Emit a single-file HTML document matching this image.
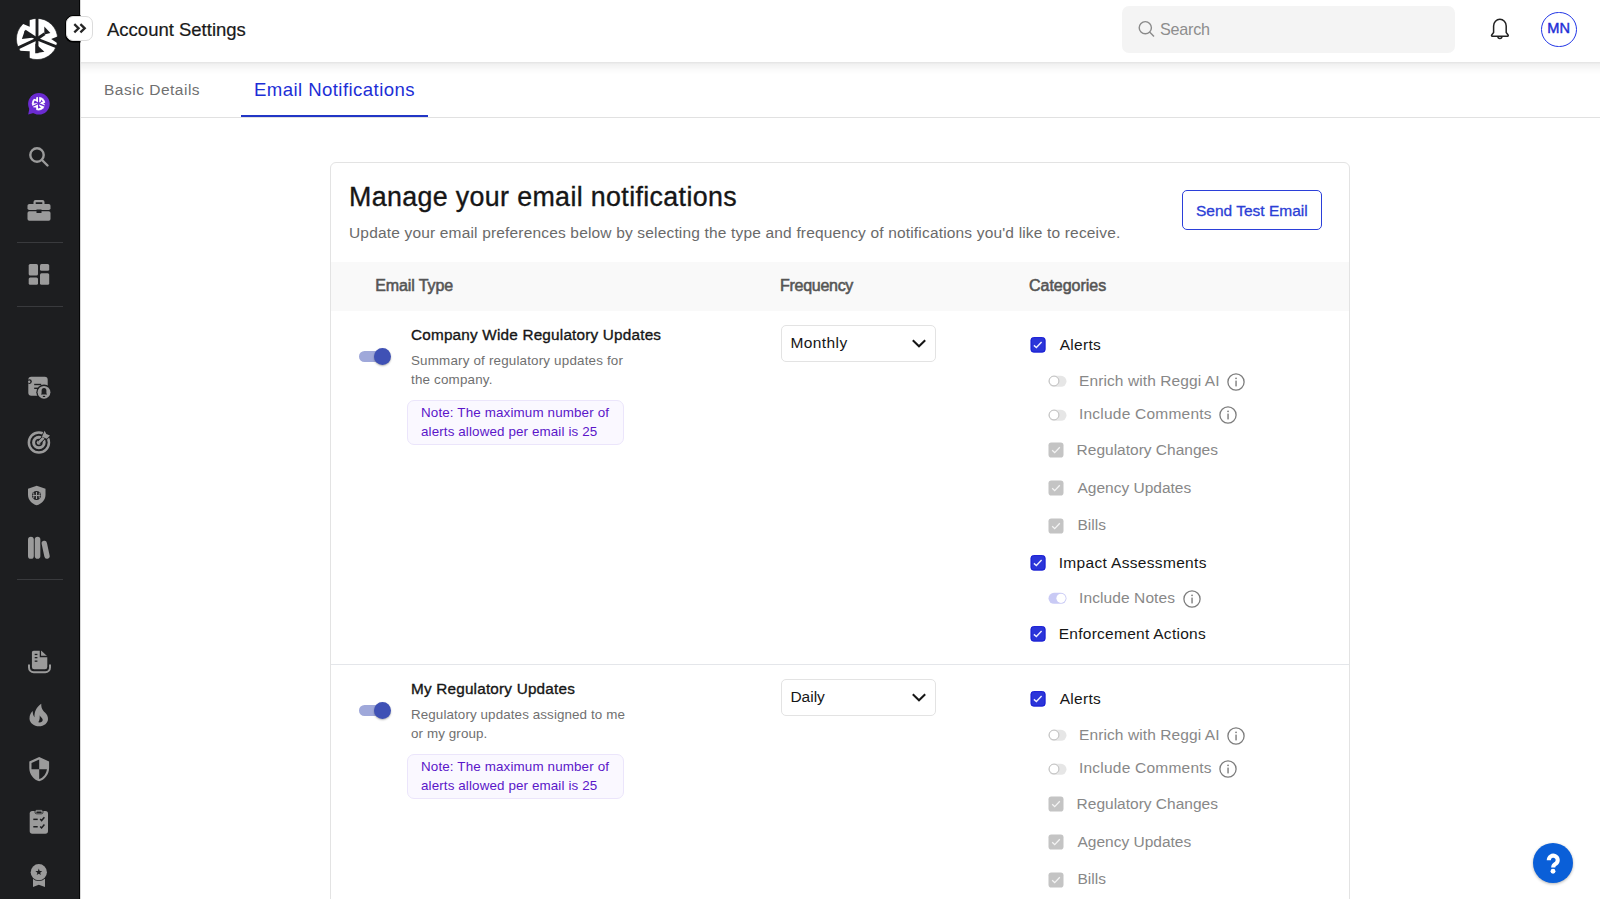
<!DOCTYPE html>
<html><head><meta charset="utf-8"><title>Account Settings</title>
<style>
html,body{margin:0;padding:0;width:1600px;height:899px;overflow:hidden;background:#fff;font-family:"Liberation Sans",sans-serif;}
.t{position:absolute;white-space:nowrap;}
</style></head><body>
<div style="position:absolute;left:0;top:0;width:1600px;height:899px;overflow:hidden">
<div style="position:absolute;left:330px;top:162px;width:1020px;height:760px;border:1px solid #e3e3e3;border-radius:6px;box-sizing:border-box;background:#fff"></div>
<div class="t" style="left:349.00px;top:183.91px;font-size:26.8px;line-height:26.8px;color:#161616;font-weight:400;letter-spacing:0.36px;-webkit-text-stroke:0.35px #161616">Manage your email notifications</div>
<div class="t" style="left:349.00px;top:224.88px;font-size:15.5px;line-height:15.5px;color:#6a6a6a;font-weight:400;letter-spacing:0.17px;">Update your email preferences below by selecting the type and frequency of notifications you'd like to receive.</div>
<div style="position:absolute;left:1182px;top:190px;width:140px;height:39.5px;border:1.5px solid #2b3fd9;border-radius:5px;box-sizing:border-box"></div>
<div class="t" style="left:1196.00px;top:202.78px;font-size:15.5px;line-height:15.5px;color:#2b3ed6;font-weight:400;letter-spacing:0px;-webkit-text-stroke:0.3px #2b3ed6">Send Test Email</div>
<div style="position:absolute;left:331px;top:262px;width:1018px;height:49px;background:#f9f9f9"></div>
<div class="t" style="left:375.30px;top:277.95px;font-size:16px;line-height:16px;color:#555;font-weight:400;letter-spacing:-0.12px;-webkit-text-stroke:0.55px #555">Email Type</div>
<div class="t" style="left:780.00px;top:277.95px;font-size:16px;line-height:16px;color:#555;font-weight:400;letter-spacing:-0.28px;-webkit-text-stroke:0.55px #555">Frequency</div>
<div class="t" style="left:1029.00px;top:277.95px;font-size:16px;line-height:16px;color:#555;font-weight:400;letter-spacing:-0.02px;-webkit-text-stroke:0.55px #555">Categories</div>
<div style="position:absolute;left:331px;top:664px;width:1018px;height:1.3px;background:#e4e6ea"></div>
<div style="position:absolute;left:359px;top:351px;width:30px;height:11px;background:#9fa8da;border-radius:6px"></div>
<div style="position:absolute;left:373.5px;top:348px;width:17.3px;height:17.3px;background:#3f51b5;border-radius:50%;box-shadow:0 1px 2px rgba(0,0,0,0.3)"></div>
<div class="t" style="left:411.00px;top:327.05px;font-size:15.3px;line-height:15.3px;color:#161616;font-weight:400;letter-spacing:0.2px;-webkit-text-stroke:0.35px #161616">Company Wide Regulatory Updates</div>
<div class="t" style="left:411.00px;top:353.55px;font-size:13.4px;line-height:13.4px;color:#707070;font-weight:400;letter-spacing:0.18px;">Summary of regulatory updates for</div>
<div class="t" style="left:411.00px;top:372.55px;font-size:13.4px;line-height:13.4px;color:#707070;font-weight:400;letter-spacing:0.18px;">the company.</div>
<div style="position:absolute;left:407px;top:400px;width:217px;height:45px;background:#faf8ff;border:1px solid #ebe5fb;border-radius:7px;box-sizing:border-box"></div>
<div class="t" style="left:421.00px;top:405.75px;font-size:13.4px;line-height:13.4px;color:#5b16c9;font-weight:400;letter-spacing:0.14px;">Note: The maximum number of</div>
<div class="t" style="left:421.00px;top:424.95px;font-size:13.4px;line-height:13.4px;color:#5b16c9;font-weight:400;letter-spacing:0.12px;">alerts allowed per email is 25</div>
<div style="position:absolute;left:780.5px;top:324.5px;width:155px;height:37px;border:1.5px solid #e3e3e3;border-radius:5px;box-sizing:border-box;background:#fff"></div>
<div class="t" style="left:790.40px;top:334.88px;font-size:15.5px;line-height:15.5px;color:#161616;font-weight:400;letter-spacing:0.43px;">Monthly</div>
<svg style="position:absolute;left:910px;top:335.5px" width="18" height="14" viewBox="0 0 18 14">
<path d="M2.8 4.2 L9 10.3 L15.2 4.2" fill="none" stroke="#161616" stroke-width="2.0"/>
</svg>
<svg style="position:absolute;left:1029.7px;top:337.1px" width="16" height="16" viewBox="0 0 16 16">
<rect x="0.95" y="0.55" width="14.2" height="14.6" rx="2.6" fill="#2b35d9" stroke="#0d12d2" stroke-width="0.9"/>
<path d="M3.9 8.4 L6.4 10.6 L11.6 5" fill="none" stroke="#eef" stroke-width="1.4"/>
</svg>
<div class="t" style="left:1059.70px;top:337.28px;font-size:15.5px;line-height:15.5px;color:#161616;font-weight:400;letter-spacing:0.3px;">Alerts</div>
<svg style="position:absolute;left:1047.5px;top:375px" width="20" height="13" viewBox="0 0 20 13">
<rect x="0.5" y="0.8" width="18" height="11" rx="5.5" fill="#e6e6e6"/>
<circle cx="6" cy="6" r="4.9" fill="#fff" stroke="#bdbdbd" stroke-width="1"/>
</svg>
<div class="t" style="left:1079.00px;top:372.58px;font-size:15.5px;line-height:15.5px;color:#888;font-weight:400;letter-spacing:0.1px;">Enrich with Reggi AI</div>
<svg style="position:absolute;left:1225.6px;top:371.5px" width="20" height="20" viewBox="0 0 20 20">
<circle cx="10" cy="10" r="8.1" fill="none" stroke="#7d7d7d" stroke-width="1.3"/>
<rect x="9.35" y="8.6" width="1.4" height="5.8" fill="#7d7d7d"/>
<circle cx="10.05" cy="6.3" r="0.9" fill="#7d7d7d"/>
</svg>
<svg style="position:absolute;left:1047.5px;top:408.5px" width="20" height="13" viewBox="0 0 20 13">
<rect x="0.5" y="0.8" width="18" height="11" rx="5.5" fill="#e6e6e6"/>
<circle cx="6" cy="6" r="4.9" fill="#fff" stroke="#bdbdbd" stroke-width="1"/>
</svg>
<div class="t" style="left:1079.00px;top:406.08px;font-size:15.5px;line-height:15.5px;color:#888;font-weight:400;letter-spacing:0.22px;">Include Comments</div>
<svg style="position:absolute;left:1217.6px;top:404.6px" width="20" height="20" viewBox="0 0 20 20">
<circle cx="10" cy="10" r="8.1" fill="none" stroke="#7d7d7d" stroke-width="1.3"/>
<rect x="9.35" y="8.6" width="1.4" height="5.8" fill="#7d7d7d"/>
<circle cx="10.05" cy="6.3" r="0.9" fill="#7d7d7d"/>
</svg>
<svg style="position:absolute;left:1047.8px;top:442px" width="16" height="16" viewBox="0 0 16 16">
<rect x="0.5" y="0.5" width="15" height="15" rx="2.8" fill="#c4c4c4"/>
<path d="M4.2 8.2 L6.7 10.6 L11.8 5.3" fill="none" stroke="#f4f4f4" stroke-width="1.3"/>
</svg>
<div class="t" style="left:1076.60px;top:442.08px;font-size:15.5px;line-height:15.5px;color:#888;font-weight:400;letter-spacing:0px;">Regulatory Changes</div>
<svg style="position:absolute;left:1047.8px;top:480px" width="16" height="16" viewBox="0 0 16 16">
<rect x="0.5" y="0.5" width="15" height="15" rx="2.8" fill="#c4c4c4"/>
<path d="M4.2 8.2 L6.7 10.6 L11.8 5.3" fill="none" stroke="#f4f4f4" stroke-width="1.3"/>
</svg>
<div class="t" style="left:1077.50px;top:479.68px;font-size:15.5px;line-height:15.5px;color:#888;font-weight:400;letter-spacing:0px;">Agency Updates</div>
<svg style="position:absolute;left:1047.8px;top:518px" width="16" height="16" viewBox="0 0 16 16">
<rect x="0.5" y="0.5" width="15" height="15" rx="2.8" fill="#c4c4c4"/>
<path d="M4.2 8.2 L6.7 10.6 L11.8 5.3" fill="none" stroke="#f4f4f4" stroke-width="1.3"/>
</svg>
<div class="t" style="left:1077.50px;top:516.88px;font-size:15.5px;line-height:15.5px;color:#888;font-weight:400;letter-spacing:0px;">Bills</div>
<svg style="position:absolute;left:1029.7px;top:555.1px" width="16" height="16" viewBox="0 0 16 16">
<rect x="0.95" y="0.55" width="14.2" height="14.6" rx="2.6" fill="#2b35d9" stroke="#0d12d2" stroke-width="0.9"/>
<path d="M3.9 8.4 L6.4 10.6 L11.6 5" fill="none" stroke="#eef" stroke-width="1.4"/>
</svg>
<div class="t" style="left:1058.70px;top:555.38px;font-size:15.5px;line-height:15.5px;color:#161616;font-weight:400;letter-spacing:0.33px;">Impact Assessments</div>
<svg style="position:absolute;left:1047.5px;top:592px" width="20" height="13" viewBox="0 0 20 13">
<rect x="0.5" y="0.8" width="18" height="11" rx="5.5" fill="#c9caf5"/>
<circle cx="13" cy="6.3" r="4.6" fill="#fff"/>
</svg>
<div class="t" style="left:1079.00px;top:590.38px;font-size:15.5px;line-height:15.5px;color:#888;font-weight:400;letter-spacing:0.1px;">Include Notes</div>
<svg style="position:absolute;left:1182px;top:589.2px" width="20" height="20" viewBox="0 0 20 20">
<circle cx="10" cy="10" r="8.1" fill="none" stroke="#7d7d7d" stroke-width="1.3"/>
<rect x="9.35" y="8.6" width="1.4" height="5.8" fill="#7d7d7d"/>
<circle cx="10.05" cy="6.3" r="0.9" fill="#7d7d7d"/>
</svg>
<svg style="position:absolute;left:1029.7px;top:626.1px" width="16" height="16" viewBox="0 0 16 16">
<rect x="0.95" y="0.55" width="14.2" height="14.6" rx="2.6" fill="#2b35d9" stroke="#0d12d2" stroke-width="0.9"/>
<path d="M3.9 8.4 L6.4 10.6 L11.6 5" fill="none" stroke="#eef" stroke-width="1.4"/>
</svg>
<div class="t" style="left:1058.70px;top:625.88px;font-size:15.5px;line-height:15.5px;color:#161616;font-weight:400;letter-spacing:0.27px;">Enforcement Actions</div>
<div style="position:absolute;left:359px;top:705px;width:30px;height:11px;background:#9fa8da;border-radius:6px"></div>
<div style="position:absolute;left:373.5px;top:702px;width:17.3px;height:17.3px;background:#3f51b5;border-radius:50%;box-shadow:0 1px 2px rgba(0,0,0,0.3)"></div>
<div class="t" style="left:411.00px;top:681.05px;font-size:15.3px;line-height:15.3px;color:#161616;font-weight:400;letter-spacing:0.2px;-webkit-text-stroke:0.35px #161616">My Regulatory Updates</div>
<div class="t" style="left:411.00px;top:707.55px;font-size:13.4px;line-height:13.4px;color:#707070;font-weight:400;letter-spacing:0.1px;">Regulatory updates assigned to me</div>
<div class="t" style="left:411.00px;top:726.55px;font-size:13.4px;line-height:13.4px;color:#707070;font-weight:400;letter-spacing:0.1px;">or my group.</div>
<div style="position:absolute;left:407px;top:754px;width:217px;height:45px;background:#faf8ff;border:1px solid #ebe5fb;border-radius:7px;box-sizing:border-box"></div>
<div class="t" style="left:421.00px;top:759.75px;font-size:13.4px;line-height:13.4px;color:#5b16c9;font-weight:400;letter-spacing:0.14px;">Note: The maximum number of</div>
<div class="t" style="left:421.00px;top:778.95px;font-size:13.4px;line-height:13.4px;color:#5b16c9;font-weight:400;letter-spacing:0.12px;">alerts allowed per email is 25</div>
<div style="position:absolute;left:780.5px;top:678.5px;width:155px;height:37px;border:1.5px solid #e3e3e3;border-radius:5px;box-sizing:border-box;background:#fff"></div>
<div class="t" style="left:790.40px;top:688.88px;font-size:15.5px;line-height:15.5px;color:#161616;font-weight:400;letter-spacing:0px;">Daily</div>
<svg style="position:absolute;left:910px;top:689.5px" width="18" height="14" viewBox="0 0 18 14">
<path d="M2.8 4.2 L9 10.3 L15.2 4.2" fill="none" stroke="#161616" stroke-width="2.0"/>
</svg>
<svg style="position:absolute;left:1029.7px;top:691.1px" width="16" height="16" viewBox="0 0 16 16">
<rect x="0.95" y="0.55" width="14.2" height="14.6" rx="2.6" fill="#2b35d9" stroke="#0d12d2" stroke-width="0.9"/>
<path d="M3.9 8.4 L6.4 10.6 L11.6 5" fill="none" stroke="#eef" stroke-width="1.4"/>
</svg>
<div class="t" style="left:1059.70px;top:691.28px;font-size:15.5px;line-height:15.5px;color:#161616;font-weight:400;letter-spacing:0.3px;">Alerts</div>
<svg style="position:absolute;left:1047.5px;top:729px" width="20" height="13" viewBox="0 0 20 13">
<rect x="0.5" y="0.8" width="18" height="11" rx="5.5" fill="#e6e6e6"/>
<circle cx="6" cy="6" r="4.9" fill="#fff" stroke="#bdbdbd" stroke-width="1"/>
</svg>
<div class="t" style="left:1079.00px;top:726.58px;font-size:15.5px;line-height:15.5px;color:#888;font-weight:400;letter-spacing:0.1px;">Enrich with Reggi AI</div>
<svg style="position:absolute;left:1225.6px;top:725.5px" width="20" height="20" viewBox="0 0 20 20">
<circle cx="10" cy="10" r="8.1" fill="none" stroke="#7d7d7d" stroke-width="1.3"/>
<rect x="9.35" y="8.6" width="1.4" height="5.8" fill="#7d7d7d"/>
<circle cx="10.05" cy="6.3" r="0.9" fill="#7d7d7d"/>
</svg>
<svg style="position:absolute;left:1047.5px;top:762.5px" width="20" height="13" viewBox="0 0 20 13">
<rect x="0.5" y="0.8" width="18" height="11" rx="5.5" fill="#e6e6e6"/>
<circle cx="6" cy="6" r="4.9" fill="#fff" stroke="#bdbdbd" stroke-width="1"/>
</svg>
<div class="t" style="left:1079.00px;top:760.08px;font-size:15.5px;line-height:15.5px;color:#888;font-weight:400;letter-spacing:0.22px;">Include Comments</div>
<svg style="position:absolute;left:1217.6px;top:758.6px" width="20" height="20" viewBox="0 0 20 20">
<circle cx="10" cy="10" r="8.1" fill="none" stroke="#7d7d7d" stroke-width="1.3"/>
<rect x="9.35" y="8.6" width="1.4" height="5.8" fill="#7d7d7d"/>
<circle cx="10.05" cy="6.3" r="0.9" fill="#7d7d7d"/>
</svg>
<svg style="position:absolute;left:1047.8px;top:796px" width="16" height="16" viewBox="0 0 16 16">
<rect x="0.5" y="0.5" width="15" height="15" rx="2.8" fill="#c4c4c4"/>
<path d="M4.2 8.2 L6.7 10.6 L11.8 5.3" fill="none" stroke="#f4f4f4" stroke-width="1.3"/>
</svg>
<div class="t" style="left:1076.60px;top:796.08px;font-size:15.5px;line-height:15.5px;color:#888;font-weight:400;letter-spacing:0px;">Regulatory Changes</div>
<svg style="position:absolute;left:1047.8px;top:834px" width="16" height="16" viewBox="0 0 16 16">
<rect x="0.5" y="0.5" width="15" height="15" rx="2.8" fill="#c4c4c4"/>
<path d="M4.2 8.2 L6.7 10.6 L11.8 5.3" fill="none" stroke="#f4f4f4" stroke-width="1.3"/>
</svg>
<div class="t" style="left:1077.50px;top:833.68px;font-size:15.5px;line-height:15.5px;color:#888;font-weight:400;letter-spacing:0px;">Agency Updates</div>
<svg style="position:absolute;left:1047.8px;top:872px" width="16" height="16" viewBox="0 0 16 16">
<rect x="0.5" y="0.5" width="15" height="15" rx="2.8" fill="#c4c4c4"/>
<path d="M4.2 8.2 L6.7 10.6 L11.8 5.3" fill="none" stroke="#f4f4f4" stroke-width="1.3"/>
</svg>
<div class="t" style="left:1077.50px;top:870.88px;font-size:15.5px;line-height:15.5px;color:#888;font-weight:400;letter-spacing:0px;">Bills</div>
<svg style="position:absolute;left:1029.7px;top:909.1px" width="16" height="16" viewBox="0 0 16 16">
<rect x="0.95" y="0.55" width="14.2" height="14.6" rx="2.6" fill="#2b35d9" stroke="#0d12d2" stroke-width="0.9"/>
<path d="M3.9 8.4 L6.4 10.6 L11.6 5" fill="none" stroke="#eef" stroke-width="1.4"/>
</svg>
<div class="t" style="left:1058.70px;top:909.38px;font-size:15.5px;line-height:15.5px;color:#161616;font-weight:400;letter-spacing:0.33px;">Impact Assessments</div>
<svg style="position:absolute;left:1047.5px;top:946px" width="20" height="13" viewBox="0 0 20 13">
<rect x="0.5" y="0.8" width="18" height="11" rx="5.5" fill="#c9caf5"/>
<circle cx="13" cy="6.3" r="4.6" fill="#fff"/>
</svg>
<div class="t" style="left:1079.00px;top:944.38px;font-size:15.5px;line-height:15.5px;color:#888;font-weight:400;letter-spacing:0.1px;">Include Notes</div>
<svg style="position:absolute;left:1182px;top:943.2px" width="20" height="20" viewBox="0 0 20 20">
<circle cx="10" cy="10" r="8.1" fill="none" stroke="#7d7d7d" stroke-width="1.3"/>
<rect x="9.35" y="8.6" width="1.4" height="5.8" fill="#7d7d7d"/>
<circle cx="10.05" cy="6.3" r="0.9" fill="#7d7d7d"/>
</svg>
<svg style="position:absolute;left:1029.7px;top:980.1px" width="16" height="16" viewBox="0 0 16 16">
<rect x="0.95" y="0.55" width="14.2" height="14.6" rx="2.6" fill="#2b35d9" stroke="#0d12d2" stroke-width="0.9"/>
<path d="M3.9 8.4 L6.4 10.6 L11.6 5" fill="none" stroke="#eef" stroke-width="1.4"/>
</svg>
<div class="t" style="left:1058.70px;top:979.88px;font-size:15.5px;line-height:15.5px;color:#161616;font-weight:400;letter-spacing:0.27px;">Enforcement Actions</div>
<div style="position:absolute;left:80px;top:0px;width:1520px;height:62px;background:#fff"></div>
<div style="position:absolute;left:80px;top:62px;width:1520px;height:13px;background:linear-gradient(to bottom, rgba(0,0,0,0.11) 0%, rgba(0,0,0,0.055) 18%, rgba(0,0,0,0.02) 60%, rgba(0,0,0,0) 100%)"></div>
<div class="t" style="left:107.00px;top:20.54px;font-size:18.5px;line-height:18.5px;color:#1a1a1a;font-weight:400;letter-spacing:0px;-webkit-text-stroke:0.2px #1a1a1a">Account Settings</div>
<div style="position:absolute;left:1122px;top:6px;width:333px;height:46.5px;background:#f4f4f4;border-radius:7px"></div>
<svg style="position:absolute;left:1136px;top:19px" width="22" height="22" viewBox="0 0 22 22">
<circle cx="9.3" cy="8.7" r="6.1" fill="none" stroke="#8a8a8a" stroke-width="1.4"/>
<line x1="13.6" y1="13" x2="18" y2="17.5" stroke="#8a8a8a" stroke-width="1.4"/>
</svg>
<div class="t" style="left:1160.00px;top:20.88px;font-size:16.2px;line-height:16.2px;color:#8d8d8d;font-weight:400;letter-spacing:-0.25px;">Search</div>
<svg style="position:absolute;left:1488px;top:16px" width="24" height="26" viewBox="0 0 24 26">
<path d="M4.2 20.2 H19.6 a0.8 0.8 0 0 0 0.5 -1.3 L18.2 16.6 V9.9 a6.3 6.6 0 0 0 -12.6 0 V16.6 L3.7 18.9 a0.8 0.8 0 0 0 0.5 1.3 Z" fill="none" stroke="#222" stroke-width="1.5" stroke-linejoin="round"/>
<path d="M9.9 20.5 a2 2 0 0 0 4 0" fill="none" stroke="#222" stroke-width="1.5"/>
</svg>
<div style="position:absolute;left:1541px;top:11.6px;width:35.6px;height:35.6px;border:1.4px solid #2236e6;border-radius:50%;box-sizing:border-box"></div>
<div class="t" style="left:1558.80px;top:21.24px;font-size:14.6px;line-height:14.6px;color:#1f2fd6;font-weight:400;letter-spacing:0.2px;transform:translateX(-50%);-webkit-text-stroke:0.45px #1f2fd6">MN</div>
<div style="position:absolute;left:80px;top:117px;width:1520px;height:1px;background:#e1e1e1"></div>
<div class="t" style="left:104.00px;top:81.98px;font-size:15.5px;line-height:15.5px;color:#707070;font-weight:400;letter-spacing:0.5px;">Basic Details</div>
<div class="t" style="left:254.00px;top:81.25px;font-size:18.6px;line-height:18.6px;color:#1d2ed6;font-weight:400;letter-spacing:0.42px;">Email Notifications</div>
<div style="position:absolute;left:241px;top:114.5px;width:187px;height:2px;background:#2236c6"></div>
<div style="position:absolute;left:0px;top:0px;width:79px;height:899px;background:#1d1e20"></div>
<div style="position:absolute;left:79px;top:0px;width:1px;height:899px;background:#050607"></div>
<div style="position:absolute;left:80px;top:0px;width:1px;height:899px;background:#d9d9d9"></div>
<svg style="position:absolute;left:14.0px;top:15.5px" width="46" height="46" viewBox="-23 -23 46 46">
<circle r="20.6" fill="#fff"/>
<g stroke="#1d1e20" stroke-width="2.9">
<line x1="0" y1="1" x2="0" y2="-23"/>
<line x1="0" y1="0" x2="-20.5" y2="9.65"/>
<line x1="0" y1="0" x2="21" y2="8.35"/>
<line x1="0" y1="0" x2="-12.2" y2="-8.0"/>
<line x1="0" y1="0" x2="7.6" y2="-5.2"/>
<line x1="0" y1="0" x2="0" y2="14.2"/>
</g>
<g fill="#1d1e20">
<polygon points="-12.2,-8.6 -15.1,0.1 -2.9,-1.6"/>
<polygon points="7.3,-12.6 7.3,-4.6 13.4,-5.9"/>
<polygon points="-1.6,4.4 -1.6,14.2 7.4,12.7"/>
<polygon points="-7.3,-25 -7.3,-12.2 -13.2,-14.7 -25,-19.5 -25,-25"/>
<polygon points="25,-4.4 14.2,0 25,7.4"/>
<polygon points="-25,11.3 -7.3,12.2 -7.3,25 -25,25"/>
<circle r="2.4"/>
</g>
<circle r="20.6" fill="none" stroke="#1d1e20" stroke-width="0.6"/>
</svg>
<svg style="position:absolute;left:26px;top:91px" width="26" height="26" viewBox="0 0 26 26">
<circle cx="12.9" cy="12.8" r="10.8" fill="#6b2bd1"/>
<path d="M2.2 23.4 L4 14 L11 21 Z" fill="#6b2bd1"/>
</svg>
<svg style="position:absolute;left:31.40776699029126px;top:95.90776699029126px" width="15.184466019417476" height="15.184466019417476" viewBox="-23 -23 46 46">
<circle r="20.6" fill="#fff"/>
<g stroke="#6b2bd1" stroke-width="3.6">
<line x1="0" y1="1" x2="0" y2="-23"/>
<line x1="0" y1="0" x2="-20.5" y2="9.65"/>
<line x1="0" y1="0" x2="21" y2="8.35"/>
<line x1="0" y1="0" x2="-12.2" y2="-8.0"/>
<line x1="0" y1="0" x2="7.6" y2="-5.2"/>
<line x1="0" y1="0" x2="0" y2="14.2"/>
</g>
<g fill="#6b2bd1">
<polygon points="-12.2,-8.6 -15.1,0.1 -2.9,-1.6"/>
<polygon points="7.3,-12.6 7.3,-4.6 13.4,-5.9"/>
<polygon points="-1.6,4.4 -1.6,14.2 7.4,12.7"/>
<polygon points="-7.3,-25 -7.3,-12.2 -13.2,-14.7 -25,-19.5 -25,-25"/>
<polygon points="25,-4.4 14.2,0 25,7.4"/>
<polygon points="-25,11.3 -7.3,12.2 -7.3,25 -25,25"/>
<circle r="2.4"/>
</g>
<circle r="20.6" fill="none" stroke="#6b2bd1" stroke-width="0.6"/>
</svg>
<svg style="position:absolute;left:26px;top:144px" width="26" height="26" viewBox="0 0 26 26">
<circle cx="11" cy="11" r="6.7" fill="none" stroke="#9b9b9b" stroke-width="2.4"/>
<line x1="16" y1="16" x2="21.5" y2="21.5" stroke="#9b9b9b" stroke-width="2.4" stroke-linecap="round"/>
</svg>
<svg style="position:absolute;left:27px;top:199px" width="24" height="23" viewBox="0 0 24 23">
<path d="M6.5 5 V3 a2 2 0 0 1 2 -2 h7 a2 2 0 0 1 2 2 V5 h-2.2 V3.2 h-6.6 V5 Z" fill="#9b9b9b"/>
<rect x="0.5" y="5" width="23" height="6" rx="1.8" fill="#9b9b9b"/>
<rect x="0.5" y="12.2" width="23" height="9.6" rx="1.8" fill="#9b9b9b"/>
<rect x="9.5" y="10.5" width="5" height="3.5" fill="#1d1e20"/>
</svg>
<div style="position:absolute;left:17px;top:242px;width:46px;height:1.2px;background:#393a3d"></div>
<div style="position:absolute;left:17px;top:305.5px;width:46px;height:1.2px;background:#393a3d"></div>
<div style="position:absolute;left:17px;top:579px;width:46px;height:1.2px;background:#393a3d"></div>
<svg style="position:absolute;left:28px;top:263px" width="22" height="23" viewBox="0 0 22 23">
<rect x="0.7" y="1" width="9.3" height="11.6" rx="1.5" fill="#9b9b9b"/>
<rect x="0.7" y="14.6" width="9.3" height="7.1" rx="1.5" fill="#9b9b9b"/>
<rect x="12" y="1" width="9.2" height="6.8" rx="1.5" fill="#9b9b9b"/>
<rect x="12" y="10.2" width="9.2" height="11.5" rx="1.5" fill="#9b9b9b"/>
</svg>
<svg style="position:absolute;left:24px;top:372px" width="30" height="30" viewBox="0 0 30 30">
<rect x="4.3" y="4.8" width="19.4" height="19" rx="3" fill="#9b9b9b"/>
<circle cx="5.5" cy="9.6" r="2.3" fill="#1d1e20"/><circle cx="5.2" cy="9.8" r="1.2" fill="#9b9b9b"/>
<rect x="10.2" y="11.8" width="7" height="1.4" fill="#1d1e20"/>
<rect x="10.2" y="15.6" width="4" height="1.4" fill="#1d1e20"/>
<circle cx="20" cy="20.3" r="7.7" fill="#1d1e20"/>
<circle cx="20" cy="20.3" r="6.4" fill="#9b9b9b"/>
<path d="M17.6 21.8 V18.6 a2.4 2.6 0 0 1 4.8 0 V21.8 h0.6 v0.8 h-6 v-0.8 Z" fill="#1d1e20"/>
<ellipse cx="20" cy="24.4" rx="1.3" ry="0.7" fill="#1d1e20"/>
</svg>
<svg style="position:absolute;left:24px;top:426px" width="30" height="30" viewBox="0 0 30 30">
<circle cx="14.9" cy="16.5" r="10.05" fill="none" stroke="#9b9b9b" stroke-width="2.5"/>
<circle cx="14.9" cy="16.5" r="5.3" fill="none" stroke="#9b9b9b" stroke-width="3"/>
<circle cx="14.9" cy="16.5" r="2.2" fill="#9b9b9b"/>
<line x1="14.9" y1="16.5" x2="21.5" y2="9.9" stroke="#1d1e20" stroke-width="4.2"/>
<line x1="14.9" y1="16.5" x2="21.5" y2="9.9" stroke="#9b9b9b" stroke-width="2.2"/>
<path d="M18 10.8 L20.6 4.8 L22.3 8 L26 9.5 L22.8 12.8 Z" fill="#1d1e20" stroke="#1d1e20" stroke-width="1.6" stroke-linejoin="round"/>
<path d="M18 10.8 L20.6 4.8 L22.3 8 L26 9.5 L22.8 12.8 Z" fill="#9b9b9b"/>
<line x1="14.9" y1="16.5" x2="19.5" y2="11.9" stroke="#9b9b9b" stroke-width="2.2"/>
</svg>
<svg style="position:absolute;left:22px;top:480px" width="30" height="30" viewBox="0 0 30 30">
<path d="M14.7 5.7 L23.5 8.8 V15 C23.5 20 19.5 24 14.7 25.3 C9.9 24 6 20 6 15 V8.8 Z" fill="#9b9b9b"/>
<circle cx="14.5" cy="15.5" r="4.5" fill="#1d1e20"/>
<rect x="13.9" y="12" width="1.2" height="7" fill="#9b9b9b"/>
<rect x="10.5" y="15" width="8" height="1" fill="#9b9b9b"/>
<path d="M11.6 12.6 Q12.4 15.5 11.6 18.4 M17.4 12.6 Q16.6 15.5 17.4 18.4" fill="none" stroke="#9b9b9b" stroke-width="0.9"/>
</svg>
<svg style="position:absolute;left:24px;top:533px" width="30" height="30" viewBox="0 0 30 30">
<line x1="6.9" y1="6.6" x2="6.9" y2="22.9" stroke="#9b9b9b" stroke-width="5.8" stroke-linecap="round"/>
<line x1="13.55" y1="6.6" x2="13.55" y2="22.9" stroke="#9b9b9b" stroke-width="5.6" stroke-linecap="round"/>
<line x1="20.3" y1="10.5" x2="23" y2="23" stroke="#1d1e20" stroke-width="7.2" stroke-linecap="round"/>
<line x1="20.3" y1="10.5" x2="23" y2="23" stroke="#9b9b9b" stroke-width="5.4" stroke-linecap="round"/>
</svg>
<svg style="position:absolute;left:24px;top:646px" width="30" height="30" viewBox="0 0 30 30">
<path d="M5 18.5 V21.5 a4.7 4.7 0 0 0 4.7 4.7 H21.3 a4.7 4.7 0 0 0 4.7 -4.7 V18.5" fill="none" stroke="#9b9b9b" stroke-width="2"/>
<path d="M9.7 4 H17.6 L24 10 V21 a3 3 0 0 1 -3 3 H10.2 a3 3 0 0 1 -3 -3 V6.5 a2.5 2.5 0 0 1 2.5 -2.5 Z" fill="#9b9b9b" stroke="#1d1e20" stroke-width="1.4"/>
<path d="M16.4 4 V10.5 H24" fill="none" stroke="#1d1e20" stroke-width="1.3"/>
<rect x="10.7" y="7.8" width="2.7" height="1.3" fill="#1d1e20"/>
<rect x="10.7" y="11" width="2.7" height="1.3" fill="#1d1e20"/>
<rect x="10.7" y="14.5" width="2.7" height="1.3" fill="#1d1e20"/>
</svg>
<svg style="position:absolute;left:24px;top:700px" width="30" height="30" viewBox="0 0 30 30">
<path d="M17.3 3.7 C17 8 18.5 10 21 12.5 C23 14.5 24 16.5 24 19 C24 23 20 26.3 15 26.3 C10 26.3 5.5 23 5.5 18.5 C5.5 15 7 12.5 8.8 11 C8.6 13.5 9.3 15.8 10.6 17.3 C10 12 12.5 7 17.3 3.7 Z" fill="#9b9b9b"/>
<path d="M15.5 14.3 C15.5 17 18.7 17.5 18.7 20 C18.7 22 16.5 22.8 14.2 22.3 C15.8 20.5 16 17.5 15.5 14.3 Z" fill="#1d1e20"/>
</svg>
<svg style="position:absolute;left:25.80px;top:756.10px" width="26.4" height="26.4" viewBox="0 0 24 24">
<path d="M12 1L3 5v6c0 5.55 3.84 10.74 9 12 5.16-1.26 9-6.45 9-12V5l-9-4zm0 10.99h7c-.53 4.12-3.28 7.79-7 8.94V12H5V6.3l7-3.11v8.8z" fill="#9b9b9b"/>
</svg>
<svg style="position:absolute;left:24px;top:807px" width="30" height="30" viewBox="0 0 30 30">
<rect x="5.7" y="4" width="18.3" height="22.7" rx="2.6" fill="#9b9b9b"/>
<rect x="11" y="2.8" width="8" height="4" rx="1.6" fill="#9b9b9b" stroke="#1d1e20" stroke-width="0.8"/>
<rect x="12.3" y="4.6" width="5.4" height="1.5" rx="0.7" fill="#1d1e20"/>
<rect x="9.3" y="11.6" width="4.4" height="1.5" fill="#1d1e20"/>
<rect x="9.3" y="19" width="4.4" height="1.5" fill="#1d1e20"/>
<path d="M16.2 12 L17.6 13.5 L20.4 10.2 M16.2 19.4 L17.6 20.9 L20.4 17.6" fill="none" stroke="#1d1e20" stroke-width="1.5"/>
</svg>
<svg style="position:absolute;left:24px;top:860px" width="30" height="30" viewBox="0 0 30 30">
<path d="M9 19 V27 L14.8 24.7 L21 27 V19 Z" fill="#9b9b9b"/>
<circle cx="14.8" cy="12.2" r="8.9" fill="#1d1e20"/>
<circle cx="14.8" cy="12.2" r="8.1" fill="#9b9b9b"/>
<polygon points="14.8,8.6 15.7,11 18.2,11.1 16.2,12.7 16.9,15.1 14.8,13.7 12.7,15.1 13.4,12.7 11.4,11.1 13.9,11" fill="#1d1e20"/>
</svg>
<div style="position:absolute;left:64.5px;top:14.5px;width:29px;height:28px;background:#000;border-radius:8.5px;clip-path:inset(0 13px 0 0)"></div>
<div style="position:absolute;left:66px;top:16px;width:26.8px;height:25px;background:#fff;border:1px solid #dcdcdc;border-radius:7px;box-sizing:border-box"></div>
<svg style="position:absolute;left:72px;top:21.6px" width="16" height="16" viewBox="0 0 16 16">
<path d="M2.3 2.2 L6.6 6.3 L2.3 10.4 M8.4 2.2 L12.7 6.3 L8.4 10.4" fill="none" stroke="#262626" stroke-width="2.3"/>
</svg>
<div style="position:absolute;left:1533.3px;top:843.2px;width:40px;height:40px;background:#0a5fd8;border-radius:50%;box-shadow:0 1px 3px rgba(0,0,0,0.3)"></div>
<svg style="position:absolute;left:1540px;top:845px" width="28" height="34" viewBox="0 0 28 34">
<path d="M8.8 15.2 A4.45 4.45 0 1 1 16.0 18.6 Q13.2 20.3 13.2 22.6" fill="none" stroke="#fff" stroke-width="4.1"/>
<circle cx="13.0" cy="26.3" r="2.45" fill="#fff"/>
</svg>
</div>
</body></html>
